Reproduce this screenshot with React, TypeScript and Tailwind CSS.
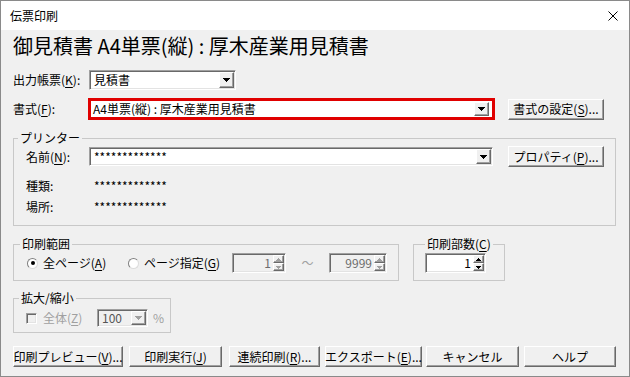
import React from "react";

const raised =
  "border border-t-white border-l-white border-r-[#696969] border-b-[#696969] shadow-[inset_-1px_-1px_0_#a0a0a0] bg-[#f0f0f0]";
const sunken =
  "border border-t-[#a0a0a0] border-l-[#a0a0a0] border-r-white border-b-white shadow-[inset_1px_1px_0_#696969,inset_-1px_-1px_0_#e3e3e3]";

function Tri({ up = false, color = "#000", w = 7, h = 4 }: { up?: boolean; color?: string; w?: number; h?: number }) {
  return (
    <svg width={w} height={h} viewBox={`0 0 ${w} ${h}`} shapeRendering="crispEdges">
      <path d={up ? `M0 ${h}H${w}L${w / 2} 0Z` : `M0 0H${w}L${w / 2} ${h}Z`} fill={color} />
    </svg>
  );
}

function U({ children }: { children: React.ReactNode }) {
  return <span className="underline underline-offset-[2px]">{children}</span>;
}

function DropBtn({ disabled = false }: { disabled?: boolean }) {
  return (
    <div className={`${raised} w-[15px] shrink-0 flex items-center justify-center`}>
      <Tri color={disabled ? "#a0a0a0" : "#000"} />
    </div>
  );
}

function Combo({ className, text, disabled = false }: { className: string; text: string; disabled?: boolean }) {
  return (
    <div className={`${sunken} ${disabled ? "bg-[#f0f0f0] text-[#555]" : "bg-white text-black"} flex items-stretch p-[1px] ${className}`}>
      <div className="flex-1 flex items-center pl-[3px] whitespace-nowrap">{text}</div>
      <DropBtn disabled={disabled} />
    </div>
  );
}

function Spin({ className, value, disabled = false }: { className: string; value: string; disabled?: boolean }) {
  return (
    <div className={`${sunken} ${disabled ? "bg-[#f0f0f0] text-[#6d6d6d]" : "bg-white text-black"} flex items-stretch p-[1px] ${className}`}>
      <div className="flex-1 flex items-center justify-end pr-[2px]">{value}</div>
      <div className="w-[11px] flex flex-col">
        <div className={`${raised} flex-1 flex items-center justify-center`}>
          <Tri up w={5} h={3} color={disabled ? "#a0a0a0" : "#000"} />
        </div>
        <div className={`${raised} flex-1 flex items-center justify-center`}>
          <Tri w={5} h={3} color={disabled ? "#a0a0a0" : "#000"} />
        </div>
      </div>
    </div>
  );
}

function Btn({ className, children }: { className: string; children: React.ReactNode }) {
  return (
    <div className={`${raised} h-[21px] flex items-center justify-center whitespace-nowrap shrink-0 ${className}`}>{children}</div>
  );
}

function Radio({ checked }: { checked: boolean }) {
  return (
    <span className="w-[11px] h-[11px] rounded-full border border-t-[#808080] border-l-[#808080] border-r-[#dcdcdc] border-b-[#dcdcdc] bg-white flex items-center justify-center shrink-0">
      {checked && <span className="w-[4px] h-[4px] rounded-full bg-black" />}
    </span>
  );
}

function Group({
  label,
  className,
  labelClass,
  children,
}: {
  label: React.ReactNode;
  className: string;
  labelClass: string;
  children: React.ReactNode;
}) {
  return (
    <div className={`relative border border-[#c8c8c8] shrink-0 ${className}`}>
      <span className={`absolute top-[-8px] px-[2px] bg-[#f0f0f0] leading-[14px] whitespace-nowrap ${labelClass}`}>{label}</span>
      {children}
    </div>
  );
}

export default function App() {
  return (
    <div className="w-[630px] h-[377px] border border-[#8a8a8a] bg-[#f0f0f0] flex flex-col font-['Noto_Sans_CJK_JP',sans-serif] text-[12px] text-black leading-none overflow-hidden">
      {/* title bar */}
      <div className="h-[29px] bg-white flex items-center justify-between pl-[9px] pr-[11px] shrink-0">
        <span>伝票印刷</span>
        <svg width="10" height="10" viewBox="0 0 10 10">
          <path d="M0.5 0.5L9.5 9.5M9.5 0.5L0.5 9.5" stroke="#000" strokeWidth="1" />
        </svg>
      </div>

      <div className="flex flex-col px-[12px]">
        {/* heading */}
        <div className="mt-[5px] h-[22px] flex items-center text-[20px] whitespace-nowrap">
          御見積書 A4単票(縦) : 厚木産業用見積書
        </div>

        {/* 出力帳票 */}
        <div className="mt-[13px] h-[20px] flex items-center">
          <span className="w-[76px] shrink-0">
            出力帳票(<U>K</U>):
          </span>
          <Combo className="w-[147px] h-[20px]" text="見積書" />
        </div>

        {/* 書式 */}
        <div className="mt-[8px] h-[22px] flex items-center">
          <span className="w-[75px] shrink-0">
            書式(<U>F</U>):
          </span>
          <div className="w-[407px] h-[22px] border-[3px] border-[#e00000] bg-white flex items-stretch shrink-0">
            <div className="flex-1 flex items-center pl-[2px] whitespace-nowrap">A4単票(縦) : 厚木産業用見積書</div>
            <div className="py-[1px] pr-[3px] flex">
              <DropBtn />
            </div>
          </div>
          <Btn className="ml-[13px] w-[96px]">
            書式の設定(<U>S</U>)...
          </Btn>
        </div>

        {/* プリンター */}
        <Group label="プリンター" className="mt-[18px] w-[603px] h-[88px] pl-[12px] pt-[7px]" labelClass="left-[4px]">
          <div className="h-[21px] flex items-center">
            <span className="w-[63px] shrink-0">
              名前(<U>N</U>):
            </span>
            <Combo className="w-[404px] h-[19px]" text="*************" />
            <Btn className="ml-[15px] w-[96px]">
              プロパティ(<U>P</U>)...
            </Btn>
          </div>
          <div className="mt-[9px] h-[20px] flex items-center">
            <span className="w-[68px] shrink-0">種類:</span>
            <span>*************</span>
          </div>
          <div className="mt-[1px] h-[20px] flex items-center">
            <span className="w-[68px] shrink-0">場所:</span>
            <span>*************</span>
          </div>
        </Group>

        {/* 印刷範囲 / 印刷部数 */}
        <div className="mt-[18px] flex">
          <Group label="印刷範囲" className="w-[386px] h-[37px] pl-[13px] pt-[8px]" labelClass="left-[6px]">
            <div className="h-[20px] flex items-center">
              <div className="w-[101px] flex items-center shrink-0">
                <Radio checked />
                <span className="ml-[5px] whitespace-nowrap">
                  全ページ(<U>A</U>)
                </span>
              </div>
              <div className="w-[104px] flex items-center shrink-0">
                <Radio checked={false} />
                <span className="ml-[5px] whitespace-nowrap">
                  ページ指定(<U>G</U>)
                </span>
              </div>
              <Spin className="w-[54px] h-[20px]" value="1" disabled />
              <span className="w-[43px] text-center text-[#a0a0a0] shrink-0">～</span>
              <Spin className="w-[58px] h-[20px]" value="9999" disabled />
            </div>
          </Group>
          <Group label={<>印刷部数(<U>C</U>)</>} className="ml-[14px] w-[92px] h-[37px] pl-[11px] pt-[8px]" labelClass="left-[11px]">
            <Spin className="w-[61px] h-[20px]" value="1" />
          </Group>
        </div>

        {/* 拡大/縮小 */}
        <Group label="拡大/縮小" className="mt-[17px] w-[158px] h-[35px] pl-[12px] pt-[10px]" labelClass="left-[5px]">
          <div className="h-[18px] flex items-center">
            <div className="w-[71px] flex items-center shrink-0">
              <span className={`${sunken} w-[11px] h-[11px] bg-[#f0f0f0] shrink-0`} />
              <span className="ml-[6px] text-[#a0a0a0] whitespace-nowrap">
                全体(<U>Z</U>)
              </span>
            </div>
            <Combo className="w-[51px] h-[18px]" text="100" disabled />
            <span className="ml-[5px] text-[#a0a0a0]">%</span>
          </div>
        </Group>

        {/* buttons */}
        <div className="mt-[13px] flex">
          <Btn className="w-[110px]">
            印刷プレビュー(<U>V</U>)...
          </Btn>
          <Btn className="ml-[6px] w-[93px]">
            印刷実行(<U>J</U>)
          </Btn>
          <Btn className="ml-[7px] w-[91px]">
            連続印刷(<U>R</U>)...
          </Btn>
          <Btn className="ml-[5px] w-[97px]">
            エクスポート(<U>E</U>)...
          </Btn>
          <Btn className="ml-[4px] w-[93px]">キャンセル</Btn>
          <Btn className="ml-[5px] w-[92px]">ヘルプ</Btn>
        </div>
      </div>
    </div>
  );
}
